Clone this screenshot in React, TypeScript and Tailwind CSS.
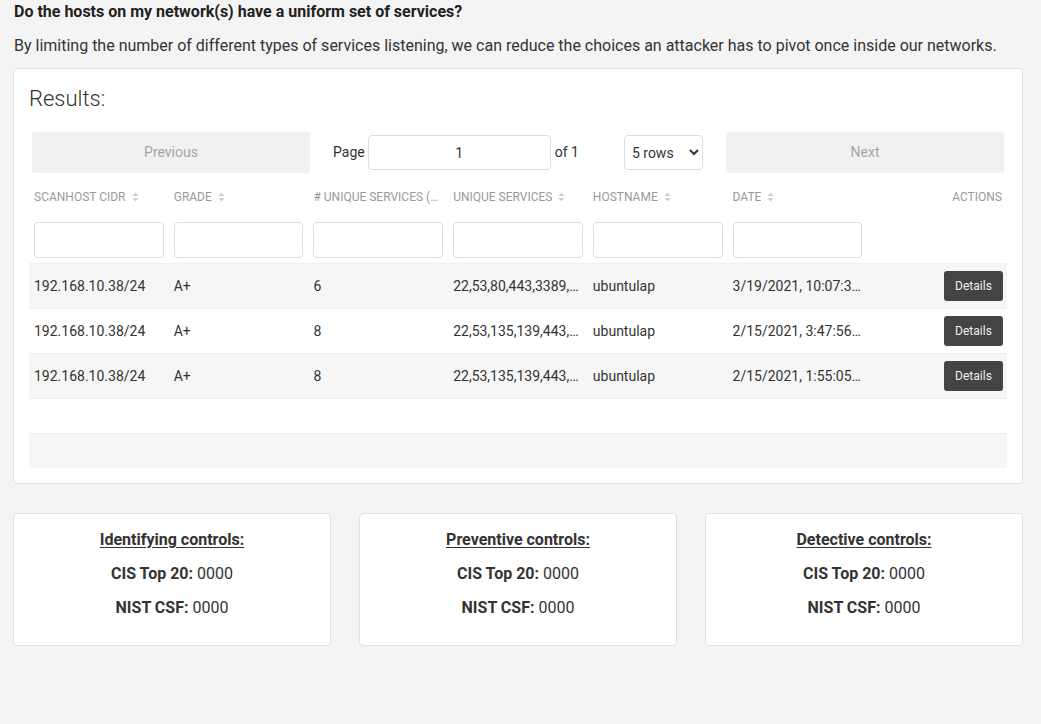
import React from "react";

const columns = [
  { key: "cidr", label: "Scanhost CIDR", sortable: true },
  { key: "grade", label: "Grade", sortable: true },
  { key: "count", label: "# Unique Services (count)", sortable: false },
  { key: "services", label: "Unique Services", sortable: true },
  { key: "hostname", label: "Hostname", sortable: true },
  { key: "date", label: "Date", sortable: true },
];

const rows = [
  {
    cidr: "192.168.10.38/24",
    grade: "A+",
    count: "6",
    services: "22,53,80,443,3389,5900,8080",
    hostname: "ubuntulap",
    date: "3/19/2021, 10:07:34 AM",
  },
  {
    cidr: "192.168.10.38/24",
    grade: "A+",
    count: "8",
    services: "22,53,135,139,443,445,3389",
    hostname: "ubuntulap",
    date: "2/15/2021, 3:47:56 PM",
  },
  {
    cidr: "192.168.10.38/24",
    grade: "A+",
    count: "8",
    services: "22,53,135,139,443,445,3389",
    hostname: "ubuntulap",
    date: "2/15/2021, 1:55:05 PM",
  },
];

const controls = ["Identifying controls:", "Preventive controls:", "Detective controls:"];

const SortIcon = () => (
  <svg width="7" height="10" viewBox="0 0 7 10" className="ml-[6px] shrink-0">
    <path d="M3.5 0.5 L6.5 4 L0.5 4 Z" fill="#cfcfcf" />
    <path d="M3.5 9.5 L6.5 6 L0.5 6 Z" fill="#cfcfcf" />
  </svg>
);

export default function App() {
  return (
    <div
      className="min-h-[724px] bg-[#f4f4f4] pl-[13px] pr-[18px] text-[#333]"
      style={{ fontFamily: "Roboto, 'Liberation Sans', sans-serif" }}
    >
      <h4 className="pl-px text-[16px] font-bold leading-[24px] text-[#222]">
        Do the hosts on my network(s) have a uniform set of services?
      </h4>
      <p className="mt-[10px] pl-px text-[16px] leading-[24px] text-[#333]">
        By limiting the number of different types of services listening, we can reduce the choices an attacker has
        to pivot once inside our networks.
      </p>

      <div className="mt-[10px] rounded-[4px] border border-[#e0e0e0] bg-white px-[15px] pt-[15px] pb-[15px]">
        <h3 className="text-[22px] font-light leading-[30px] text-[#333]">Results:</h3>

        {/* pagination */}
        <div className="mt-[18px] flex h-[41px] items-stretch px-[3px]">
          <button className="w-[278px] rounded-[3px] bg-[#f1f1f1] text-[14px] text-[#a6a6a6]">Previous</button>
          <div className="flex flex-1 items-center justify-center text-[14px] text-[#333]">
            <span>Page</span>
            <input
              readOnly
              value="1"
              className="ml-[3px] h-[35px] w-[183px] rounded-[4px] border border-[#ddd] bg-white text-center text-[14px] outline-none"
            />
            <span className="ml-[4px]">of 1</span>
            <select
              defaultValue="5"
              className="ml-[45px] h-[35px] w-[79px] rounded-[4px] border border-[#ddd] bg-white pl-[3px] text-[14px] text-[#333] outline-none"
            >
              <option value="5">5 rows</option>
              <option value="10">10 rows</option>
              <option value="20">20 rows</option>
            </select>
          </div>
          <button className="w-[278px] rounded-[3px] bg-[#f1f1f1] text-[14px] text-[#a6a6a6]">Next</button>
        </div>

        {/* table */}
        <div className="mt-[6px]">
          <div className="grid h-[36px] grid-cols-7 items-center text-[12px] uppercase text-[#9a9a9a]">
            {columns.map((c) => (
              <div key={c.key} className="flex min-w-0 items-center px-[5px]">
                <span className="truncate">{c.label}</span>
                {c.sortable && <SortIcon />}
              </div>
            ))}
            <div className="px-[5px] text-right">Actions</div>
          </div>
          <div className="grid h-[49px] grid-cols-7 items-center border-b border-[#f0f0f0] pt-[2px]">
            {columns.map((c) => (
              <div key={c.key} className="px-[5px]">
                <input className="h-[36px] w-full rounded-[4px] border border-[#ddd] bg-white outline-none" />
              </div>
            ))}
            <div />
          </div>
          {rows.map((r, i) => (
            <div
              key={i}
              className={`grid h-[45px] grid-cols-7 items-center border-b border-[#efefef] text-[14px] text-[#333] ${
                i % 2 === 0 ? "bg-[#f6f6f6]" : "bg-white"
              }`}
            >
              <div className="truncate px-[5px]">{r.cidr}</div>
              <div className="truncate px-[5px]">{r.grade}</div>
              <div className="truncate px-[5px]">{r.count}</div>
              <div className="truncate px-[5px]">{r.services}</div>
              <div className="truncate px-[5px]">{r.hostname}</div>
              <div className="truncate px-[5px]">{r.date}</div>
              <div className="flex justify-end pr-[4px]">
                <button className="h-[30px] w-[59px] rounded-[3px] bg-[#444] text-[12px] text-[#eee]">Details</button>
              </div>
            </div>
          ))}
          <div className="h-[35px] border-b border-[#efefef] bg-white" />
          <div className="h-[34px] bg-[#f6f6f6]" />
        </div>
      </div>

      {/* control cards */}
      <div className="mt-[29px] grid grid-cols-3 gap-[28px]">
        {controls.map((t) => (
          <div
            key={t}
            className="rounded-[4px] border border-[#e0e0e0] bg-white pt-[14px] pb-[15px] text-center text-[16px] leading-[24px] text-[#333]"
          >
            <p className="mb-[10px] font-bold underline underline-offset-[2px]">{t}</p>
            <p className="mb-[10px]">
              <b>CIS Top 20:</b> 0000
            </p>
            <p className="mb-[10px]">
              <b>NIST CSF:</b> 0000
            </p>
          </div>
        ))}
      </div>
    </div>
  );
}
